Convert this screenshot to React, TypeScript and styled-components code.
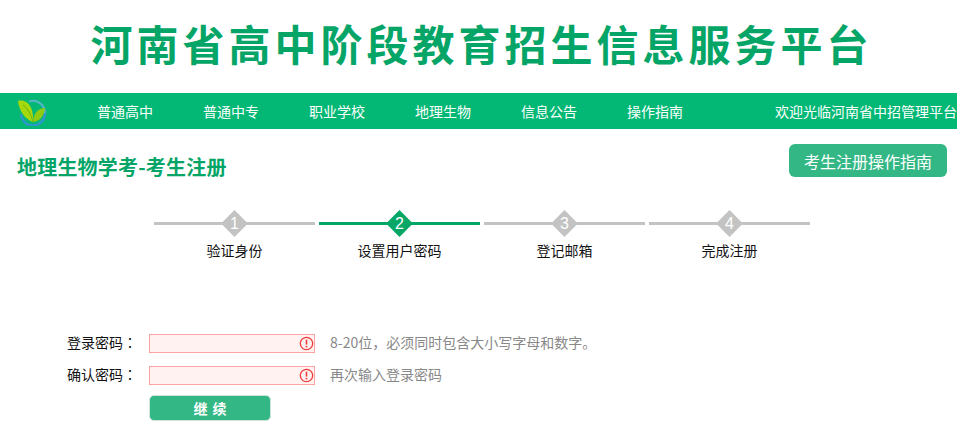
import React from "react";
import styled, { createGlobalStyle } from "styled-components";

const Global = createGlobalStyle`
  html, body { margin: 0; padding: 0; background: #fff; }
  body { font-family: "Noto Sans CJK SC", "Liberation Sans", sans-serif; overflow: hidden; }
  * { box-sizing: border-box; }
`;
const Page = styled.div`width: 957px; height: 436px; overflow: hidden;`;
const Banner = styled.h1`
  margin: 0; height: 93px; padding: 14px 0 0 6px; text-align: center;
  font-size: 42px; line-height: 58px; font-weight: 700; letter-spacing: 4px; color: #05a568;
`;
const NavBar = styled.nav`
  height: 36px; background: #03b875; display: flex; align-items: center; padding-left: 17px; color: #fff; font-size: 14px;
`;
const Logo = styled.svg`width: 30px; height: 30px; flex: none; margin-right: 50px;`;
const NavItem = styled.a`width: 106px; flex: none; line-height: 36px;`;
const Welcome = styled.span`margin-left: 42px; white-space: nowrap; line-height: 36px;`;
const TitleRow = styled.div`
  display: flex; justify-content: space-between; align-items: flex-start; padding: 15px 10px 0 17px; height: 84px;
`;
const PageTitle = styled.h2`
  margin: 9px 0 0; font-size: 20px; line-height: 28px; font-weight: 700; letter-spacing: .2px; color: #05a568;
`;
const GuideButton = styled.button`
  width: 158px; height: 33px; border: 0; border-radius: 6px; background: #33b785; color: #fff;
  font: inherit; font-size: 16px; padding: 0;
`;
const Steps = styled.div`display: flex; gap: 4px; padding-left: 154px; height: 120px;`;
const Step = styled.div`width: 161px; display: flex; flex-direction: column; align-items: center; position: relative;`;
const StepLine = styled.div<{ $on: boolean }>`
  align-self: stretch; height: 3px; margin-top: 9px; background: ${p => (p.$on ? "#05a666" : "#c3c3c3")};
`;
const Diamond = styled.div<{ $on: boolean }>`
  position: absolute; top: 1px; left: 50%; margin-left: -9.5px; width: 19px; height: 19px; transform: rotate(45deg);
  background: ${p => (p.$on ? "#05a666" : "#c3c3c3")};
`;
const StepNum = styled.span`
  position: absolute; top: 0; left: 0; width: 100%; text-align: center; color: #fff; font-size: 16px; line-height: 21px;
  font-family: "Liberation Sans", sans-serif;
`;
const StepLabel = styled.div`margin-top: 15px; font-size: 14px; line-height: 20px; color: #111;`;
const Form = styled.div`display: flex; flex-direction: column; gap: 12px;`;
const Row = styled.div`display: flex; align-items: center; height: 20px;`;
const Label = styled.label`width: 149px; padding: 0 0 2px 67px; font-size: 14px; line-height: 20px; color: #111; white-space: nowrap;`;
const Colon = styled.span`font-family: "Noto Sans CJK TC", sans-serif;`;
const Field = styled.div`
  width: 166px; height: 19px; border: 1px solid #fba3a3; background: #fff2f1; position: relative; flex: none;
`;
const Warn = styled.svg`position: absolute; right: 0; top: 1px; width: 15px; height: 15px;`;
const Hint = styled.span`margin-left: 15px; padding-bottom: 2px; font-size: 14px; line-height: 20px; color: #888;`;
const Submit = styled.button`
  margin: -2px 0 0 149px; width: 122px; height: 26px; border: 1px solid #cfe6dc; border-radius: 5px; background: #33b785;
  color: #fff; font: inherit; font-size: 14px; font-weight: 700; letter-spacing: 5px; padding: 0 0 0 5px;
`;

const nav = ["普通高中", "普通中专", "职业学校", "地理生物", "信息公告", "操作指南"];
const steps = ["验证身份", "设置用户密码", "登记邮箱", "完成注册"];

const WarnIcon = () => (
  <Warn viewBox="0 0 15 15">
    <circle cx="7.5" cy="7.5" r="6.2" fill="none" stroke="#ee3b3b" strokeWidth="1.3" />
    <path d="M7.5 3.6V8.6" stroke="#ee3b3b" strokeWidth="1.6" />
    <path d="M7.5 9.8v1.6" stroke="#ee3b3b" strokeWidth="1.6" />
  </Warn>
);

export default function App() {
  return (
    <Page>
      <Global />
      <Banner>河南省高中阶段教育招生信息服务平台</Banner>
      <NavBar>
        <Logo viewBox="0 -1 30 30">
          <path d="M12 4.6A12 12 0 0 1 28 16" fill="none" stroke="#58b4cc" strokeWidth="2" />
          <path d="M28 16A12 12 0 0 1 4 17" fill="none" stroke="#2f96cc" strokeWidth="2.4" />
          <path d="M1 4C8 2 17 7 16 25C8 22 2 14 1 4z" fill="#a6d80e" />
          <path d="M28 11C21 11 16 17 16 25C23 24 27 19 28 11z" fill="#8ecb12" />
          <path d="M6 8c5 4 8 9 10 17" stroke="#6fb00c" strokeWidth="1" fill="none" />
        </Logo>
        {nav.map(n => <NavItem key={n}>{n}</NavItem>)}
        <Welcome>欢迎光临河南省中招管理平台</Welcome>
      </NavBar>
      <TitleRow>
        <PageTitle>地理生物学考-考生注册</PageTitle>
        <GuideButton>考生注册操作指南</GuideButton>
      </TitleRow>
      <Steps>
        {steps.map((s, i) => (
          <Step key={s}>
            <StepLine $on={i === 1} />
            <Diamond $on={i === 1} />
            <StepNum>{i + 1}</StepNum>
            <StepLabel>{s}</StepLabel>
          </Step>
        ))}
      </Steps>
      <Form>
        <Row>
          <Label>登录密码<Colon>：</Colon></Label>
          <Field><WarnIcon /></Field>
          <Hint>8-20位，必须同时包含大小写字母和数字。</Hint>
        </Row>
        <Row>
          <Label>确认密码<Colon>：</Colon></Label>
          <Field><WarnIcon /></Field>
          <Hint>再次输入登录密码</Hint>
        </Row>
        <Submit>继续</Submit>
      </Form>
    </Page>
  );
}
